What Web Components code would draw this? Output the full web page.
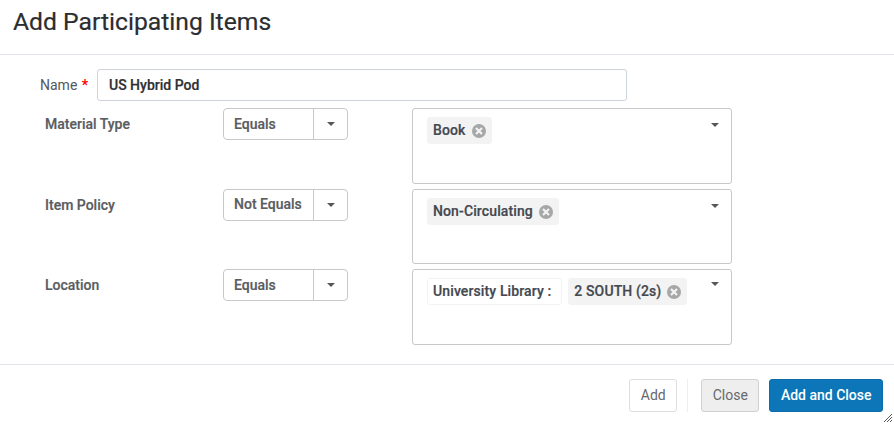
<!DOCTYPE html>
<html>
<head>
<meta charset="utf-8">
<title>Add Participating Items</title>
<style>
    html, body { margin: 0; padding: 0; background: #fff; }
    body { font-family: Roboto, "Liberation Sans", sans-serif; }
</style>
</head>
<body>
<items-dialog>
    <span slot="title">Add Participating Items</span>
    <name-field slot="name" label="Name" value="US Hybrid Pod"></name-field>
    <filter-row label="Material Type" op="Equals" style="--box-h:76px">
        <value-chip removable>Book</value-chip>
    </filter-row>
    <filter-row label="Item Policy" op="Not Equals" style="--box-h:75px;--op-shift:-1px">
        <value-chip removable>Non-Circulating</value-chip>
    </filter-row>
    <filter-row label="Location" op="Equals" style="--box-h:76px;--caret-top:12px">
        <value-chip plain>University Library :</value-chip>
        <value-chip removable>2 SOUTH (2s)</value-chip>
    </filter-row>
    <action-button slot="footer">Add</action-button>
    <span slot="footer" class="sep" style="width:1px;height:33px;background:#eceef0;margin:0 13px 0 10px"></span>
    <action-button slot="footer" kind="grey" style="margin-right:10px">Close</action-button>
    <action-button slot="footer" kind="primary">Add and Close</action-button>
</items-dialog>

<script>
class ItemsDialog extends HTMLElement {
    constructor() {
        super();
        this.attachShadow({ mode: 'open' });
        this.shadowRoot.innerHTML = `
            <style>
                :host {
                    display: flex;
                    flex-direction: column;
                    position: relative;
                    width: 894px;
                    height: 424px;
                    overflow: hidden;
                    background: #fff;
                }
                header {
                    box-sizing: border-box;
                    height: 55px;
                    padding: 7px 0 0 13px;
                    border-bottom: 1px solid #e1e4e8;
                    font-size: 24.7px;
                    line-height: 30px;
                    color: #2b2d30;
                    -webkit-text-stroke: 0.2px #2b2d30;
                    flex: none;
                }
                main {
                    height: 309px;
                    box-sizing: border-box;
                    padding-top: 14px;
                    flex: none;
                }
                .rows {
                    display: flex;
                    flex-direction: column;
                    gap: 5px;
                    margin-top: 7px;
                }
                footer {
                    border-top: 1px solid #e1e4e8;
                    display: flex;
                    justify-content: flex-end;
                    align-items: center;
                    padding: 14px 11px 0 0;
                }
                svg {
                    position: absolute;
                    right: 2px;
                    bottom: 2px;
                }
            </style>
            <header><slot name="title"></slot></header>
            <main>
                <slot name="name"></slot>
                <div class="rows"><slot></slot></div>
            </main>
            <footer><slot name="footer"></slot></footer>
            <svg width="8" height="8" viewBox="0 0 8 8" fill="none" stroke="#555" stroke-width="1">
                <path d="M0 8L8 0M3 8L8 3M6 8L8 6"/>
            </svg>
        `;
    }
}

class NameField extends HTMLElement {
    constructor() {
        super();
        this.attachShadow({ mode: 'open' });
        this.shadowRoot.innerHTML = `
            <style>
                :host {
                    display: flex;
                    align-items: center;
                    height: 32px;
                    padding-left: 40px;
                    font-size: 14px;
                }
                label { width: 57px; color: #54575b; word-spacing: 1px; }
                i { font-style: normal; font-weight: 700; color: #f00; }
                .input {
                    box-sizing: border-box;
                    width: 530px;
                    height: 32px;
                    border: 1px solid #ced3da;
                    border-radius: 3px;
                    padding: 0 11px;
                    line-height: 30px;
                    font-weight: 500;
                    color: #2f3134;
                    -webkit-text-stroke: 0.2px #2f3134;
                }
            </style>
            <label></label>
            <div class="input"></div>
        `;
    }

    connectedCallback() {
        this.shadowRoot.querySelector('label').innerHTML = this.getAttribute('label') + ' <i>*</i>';
        this.shadowRoot.querySelector('.input').textContent = this.getAttribute('value');
    }
}

class FilterRow extends HTMLElement {
    constructor() {
        super();
        this.attachShadow({ mode: 'open' });
        this.shadowRoot.innerHTML = `
            <style>
                :host {
                    display: grid;
                    grid-template-columns: 178px 189px 320px;
                    height: var(--box-h, 76px);
                    padding-left: 45px;
                    font-size: 14px;
                }
                .label {
                    font-weight: 500;
                    color: #5a5c5f;
                    -webkit-text-stroke: 0.2px #5a5c5f;
                    line-height: 32px;
                }
                .op {
                    display: flex;
                    box-sizing: border-box;
                    width: 125px;
                    height: 32px;
                    border: 1px solid #c6c8ca;
                    border-radius: 4px;
                    font-weight: 500;
                    color: #5a5c5f;
                    -webkit-text-stroke: 0.2px #5a5c5f;
                }
                .op span {
                    flex: 1;
                    padding-left: 10px;
                    line-height: calc(30px + var(--op-shift, 0px) * 2);
                }
                .op b {
                    width: 33px;
                    border-left: 1px solid #c6c8ca;
                    display: flex;
                    align-items: center;
                    justify-content: center;
                }
                .caret {
                    width: 0;
                    height: 0;
                    border-left: 4px solid transparent;
                    border-right: 4px solid transparent;
                    border-top: 4px solid #54575b;
                }
                .box {
                    position: relative;
                    box-sizing: border-box;
                    height: var(--box-h, 76px);
                    border: 1px solid #c6c8ca;
                    border-radius: 3px;
                    padding: 8px 0 0 14px;
                    display: flex;
                    align-items: flex-start;
                    gap: 6px;
                }
                .box .caret {
                    position: absolute;
                    right: 12px;
                    top: var(--caret-top, 14px);
                }
            </style>
            <div class="label"></div>
            <div class="op"><span></span><b><div class="caret"></div></b></div>
            <div class="box"><slot></slot><div class="caret"></div></div>
        `;
    }

    connectedCallback() {
        this.shadowRoot.querySelector('.label').textContent = this.getAttribute('label');
        this.shadowRoot.querySelector('.op span').textContent = this.getAttribute('op');
    }
}

class ValueChip extends HTMLElement {
    constructor() {
        super();
        this.attachShadow({ mode: 'open' });
        this.shadowRoot.innerHTML = `
            <style>
                :host {
                    display: inline-flex;
                    align-items: center;
                    gap: 6px;
                    box-sizing: border-box;
                    height: 27px;
                    padding: 0 5px;
                    border-radius: 3px;
                    border: 1px solid #f3f3f4;
                    background: #f3f3f4;
                    font-size: 14px;
                    font-weight: 500;
                    letter-spacing: 0.12px;
                    color: #44484f;
                    -webkit-text-stroke: 0.2px #44484f;
                    white-space: nowrap;
                    line-height: 24px;
                }
                :host([plain]) { background: #fff; padding-right: 10px; }
                span { position: relative; top: -1px; }
                svg { display: block; flex: none; }
            </style>
            <span><slot></slot></span>
        `;
    }

    connectedCallback() {
        if (this.hasAttribute('removable')) {
            this.shadowRoot.innerHTML += `
                <svg width="14" height="14" viewBox="0 0 14 14">
                    <circle cx="7" cy="7" r="7" fill="#a6a7a9"/>
                    <path d="M4 4L10 10M10 4L4 10" stroke="#f3f3f4" stroke-width="2.2"/>
                </svg>`;
        }
    }
}

class ActionButton extends HTMLElement {
    constructor() {
        super();
        this.attachShadow({ mode: 'open' });
        this.shadowRoot.innerHTML = `
            <style>
                :host {
                    display: block;
                    box-sizing: border-box;
                    height: 33px;
                    padding: 0 10.5px;
                    border: 1px solid #dcdee0;
                    border-radius: 3px;
                    background: #fff;
                    color: #66696d;
                    font-size: 14px;
                    line-height: 30px;
                }
                :host([kind="grey"]) {
                    background: #eeeeee;
                    border-color: #cfd0d2;
                }
                :host([kind="primary"]) {
                    background: #0c76b8;
                    border-color: #0c6ba8;
                    color: #fff;
                    font-weight: 500;
                }
            </style>
            <slot></slot>
        `;
    }
}

customElements.define('items-dialog', ItemsDialog);
customElements.define('name-field', NameField);
customElements.define('filter-row', FilterRow);
customElements.define('value-chip', ValueChip);
customElements.define('action-button', ActionButton);
</script>
</body>
</html>
